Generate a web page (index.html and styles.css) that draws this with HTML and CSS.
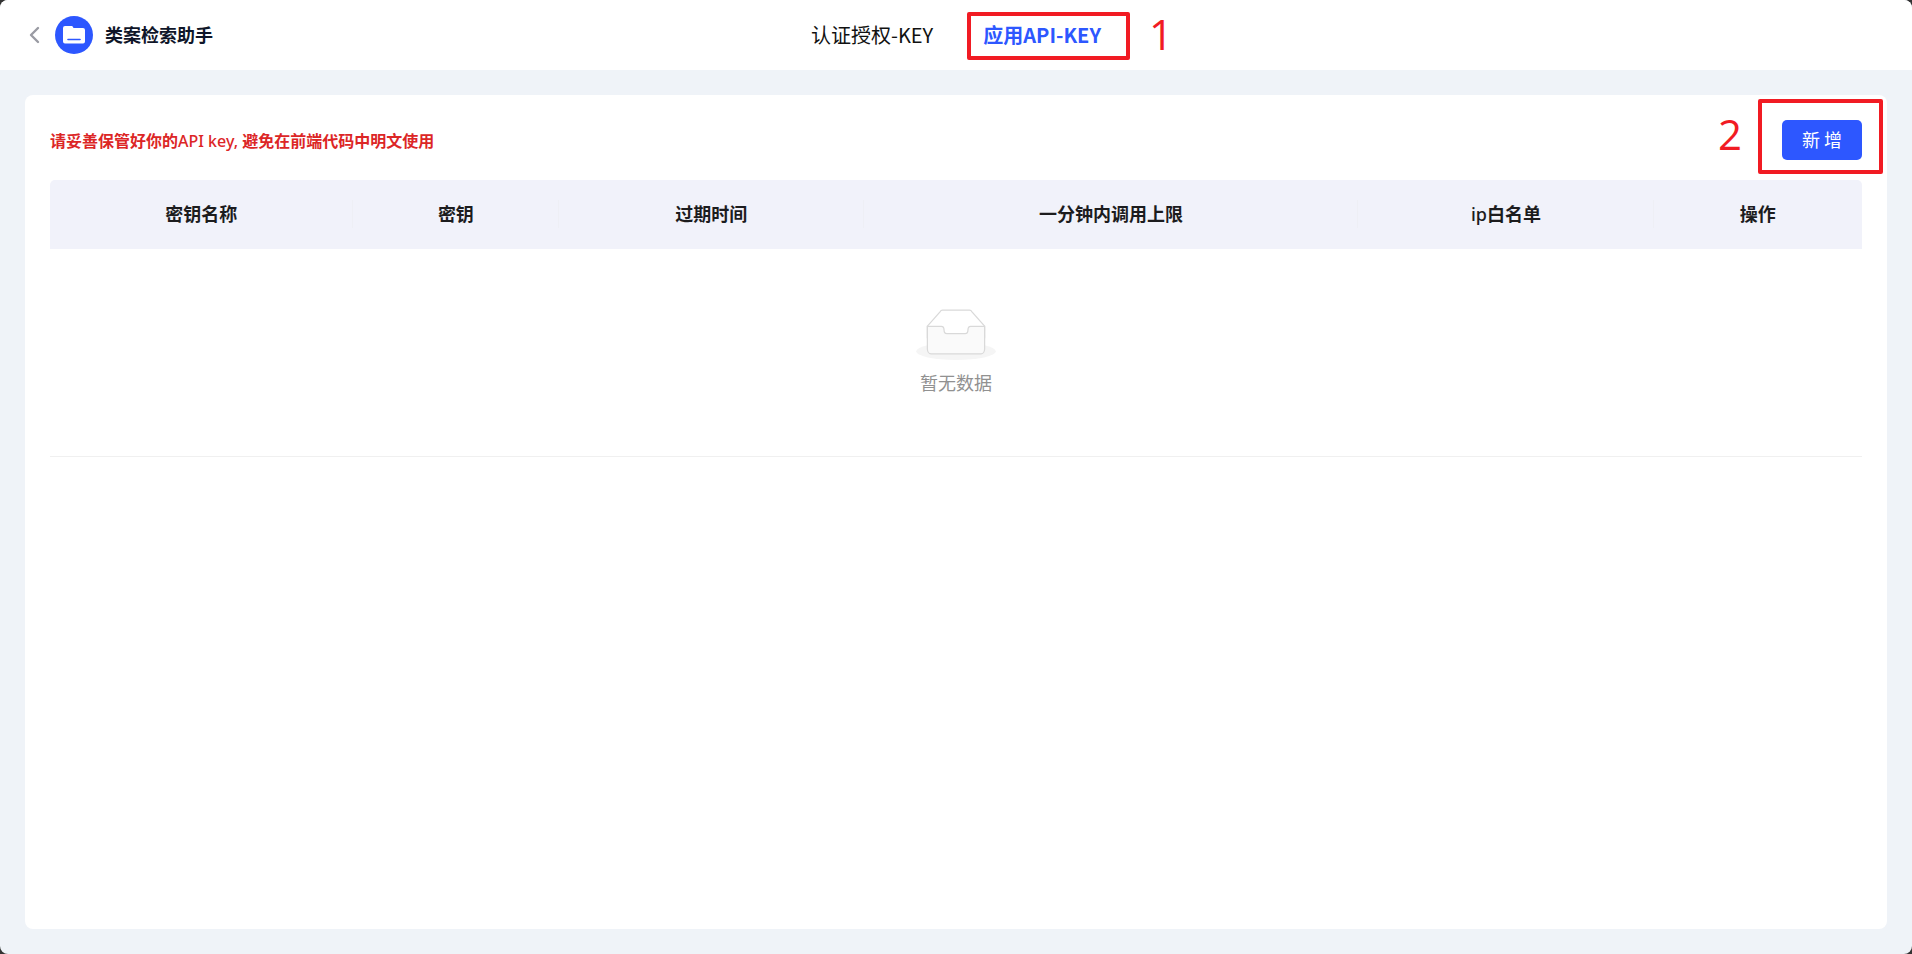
FILE: index.html
```html
<!DOCTYPE html>
<html lang="zh-CN">
<head>
  <meta charset="UTF-8">
  <title>类案检索助手</title>
  <link rel="stylesheet" href="styles.css">
</head>
<body>
  <div class="app">

    <!-- 顶部栏 -->
    <header class="header">
      <div class="brand">
        <button type="button" class="back-btn" aria-label="返回">
          <svg width="11" height="18" viewBox="0 0 11 18" fill="none" stroke="#9a9ba3" stroke-width="2.4" stroke-linecap="round" stroke-linejoin="round">
            <path d="M9 2 2 9l7 7"/>
          </svg>
        </button>
        <span class="logo">
          <svg width="22" height="18" viewBox="0 0 22 18">
            <path fill="#fff" d="M2 0h6.500c.8 0 1.200.4 1.600 1.200l.4.800H20a2 2 0 0 1 2 2v11.500a2 2 0 0 1-2 2H2a2 2 0 0 1-2-2V2a2 2 0 0 1 2-2z"/>
            <path stroke="#2d57ff" stroke-width="1.600" stroke-linecap="round" d="M5 13.500h12"/>
          </svg>
        </span>
        <h1 class="title">类案检索助手</h1>
      </div>
      <nav class="tabs">
        <a href="#auth" class="tab">认证授权-KEY</a>
        <a href="#api" class="tab active">应用API-KEY<span class="mark mark-tab"></span><span class="step step-tab">1</span></a>
      </nav>
    </header>

    <!-- 密钥列表 -->
    <main class="card">
      <div class="toolbar">
        <p class="warning">请妥善保管好你的<span class="latin">API key, </span>避免在前端代码中明文使用</p>
        <div class="action">
          <button type="button" class="add-btn">新 增</button>
          <span class="mark mark-add"></span>
          <span class="step step-add">2</span>
        </div>
      </div>

      <table class="table">
        <colgroup>
          <col class="col-name">
          <col class="col-key">
          <col class="col-time">
          <col class="col-limit">
          <col class="col-ip">
          <col class="col-action">
        </colgroup>
        <thead>
          <tr>
            <th>密钥名称</th>
            <th>密钥</th>
            <th>过期时间</th>
            <th>一分钟内调用上限</th>
            <th><span class="latin">ip</span>白名单</th>
            <th>操作</th>
          </tr>
        </thead>
        <tbody>
          <tr>
            <td colspan="6">
              <div class="empty">
                <svg width="80" height="51" viewBox="0 0 64 41">
                  <g transform="translate(0 1)" fill="none" fill-rule="evenodd">
                    <ellipse fill="#f5f5f5" cx="32" cy="33" rx="32" ry="7"/>
                    <g fill-rule="nonzero" stroke="#d9d9d9">
                      <path d="M55 12.760 44.854 1.258C44.367.474 43.656 0 42.907 0H21.093c-.749 0-1.460.474-1.947 1.257L9 12.761V22h46v-9.240z"/>
                      <path fill="#fafafa" d="M41.613 15.931c0-1.605.994-2.930 2.227-2.931H55v18.137C55 33.260 53.680 35 52.050 35h-40.100C10.320 35 9 33.259 9 31.137V13h11.160c1.233 0 2.227 1.323 2.227 2.928v.022c0 1.605 1.005 2.901 2.237 2.901h14.752c1.232 0 2.237-1.308 2.237-2.913v-.007z"/>
                    </g>
                  </g>
                </svg>
                <p class="empty-text">暂无数据</p>
              </div>
            </td>
          </tr>
        </tbody>
      </table>
    </main>

  </div>
</body>
</html>
```
FILE: styles.css
```css
* {
  box-sizing: border-box;
}

body {
  margin: 0;
  background-color: #333;
  color: #1c1c1e;
  font-family: "Noto Sans CJK SC", sans-serif;
  font-size: 18px;
}

h1, p {
  margin: 0;
}

button {
  border: none;
  font-family: inherit;
  cursor: pointer;
}

.app {
  display: flex;
  flex-direction: column;
  min-height: 100vh;
  background-color: #eff3f8;
  border-radius: 8px;
  overflow: hidden;
}

/* 顶部栏 */
.header {
  display: grid;
  grid-template-columns: 1fr auto 1fr;
  align-items: center;
  height: 70px;
  padding: 0 25px;
  background-color: #fff;
}

.brand {
  display: flex;
  align-items: center;
}

.back-btn {
  display: flex;
  padding: 4px;
  background: none;
}

.logo {
  display: flex;
  align-items: center;
  justify-content: center;
  width: 38px;
  height: 38px;
  margin: 0 12px 0 11px;
  background-color: #2d57ff;
  border-radius: 50%;
}

.title {
  padding-bottom: 2px;
  color: #0f1629;
  font-size: 18px;
  font-weight: 700;
  line-height: 28px;
}

.tabs {
  display: flex;
  gap: 50px;
}

.tab {
  position: relative;
  color: #111;
  font-size: 20px;
  line-height: 30px;
  text-decoration: none;
}

.tab.active {
  color: #2d57ff;
  font-weight: 700;
}

/* 内容卡片 */
.card {
  flex: 1;
  margin: 25px;
  padding: 25px;
  background-color: #fff;
  border-radius: 8px;
}

.toolbar {
  display: flex;
  align-items: center;
  justify-content: space-between;
  margin-bottom: 20px;
}

.warning {
  color: #dc2626;
  font-size: 16px;
  font-weight: 700;
  line-height: 24px;
}

.latin {
  font-family: "Noto Sans", sans-serif;
  font-weight: 500;
}

.action {
  position: relative;
}

.add-btn {
  display: block;
  height: 40px;
  padding: 0 20px 2px;
  background-color: #2d57ff;
  border-radius: 5px;
  color: #fff;
  font-size: 18px;
}

/* 红框和步骤编号 */
.mark {
  position: absolute;
  border: 4px solid #f11b23;
  border-radius: 2px;
}

.mark-tab {
  inset: -8px -29px -10px -16px;
}

.mark-add {
  inset: -21px -21px -14px -24px;
}

.step {
  position: absolute;
  color: #f11b23;
  font-family: "Open Sans", sans-serif;
  font-size: 42px;
  font-weight: 400;
  line-height: 42px;
}

.step-tab {
  top: -7px;
  left: calc(100% + 48px);
}

.step-add {
  top: -7px;
  right: calc(100% + 40px);
}

/* 表格 */
.table {
  width: 100%;
  border-collapse: separate;
  border-spacing: 0;
  table-layout: fixed;
}

.col-name { width: 16.7%; }
.col-key { width: 11.4%; }
.col-time { width: 16.8%; }
.col-limit { width: 27.3%; }
.col-ip { width: 16.3%; }
.col-action { width: 11.5%; }

.table th {
  position: relative;
  height: 69px;
  padding: 0 20px 3px;
  background-color: #f1f2fa;
  font-size: 18px;
  font-weight: 700;
  text-align: center;
}

.table th:first-child {
  border-top-left-radius: 5px;
}

.table th:last-child {
  border-top-right-radius: 5px;
}

.table th:not(:last-child)::after {
  content: "";
  position: absolute;
  top: 20px;
  right: 0;
  width: 1px;
  height: 28px;
  background-color: #eeeff5;
}

.table td {
  padding: 20px;
  border-bottom: 1px solid #f0f0f0;
}

.empty {
  display: flex;
  flex-direction: column;
  align-items: center;
  gap: 9px;
  padding: 40px 0 41px;
}

.empty-text {
  color: #919191;
  font-size: 18px;
  line-height: 26px;
}
```
